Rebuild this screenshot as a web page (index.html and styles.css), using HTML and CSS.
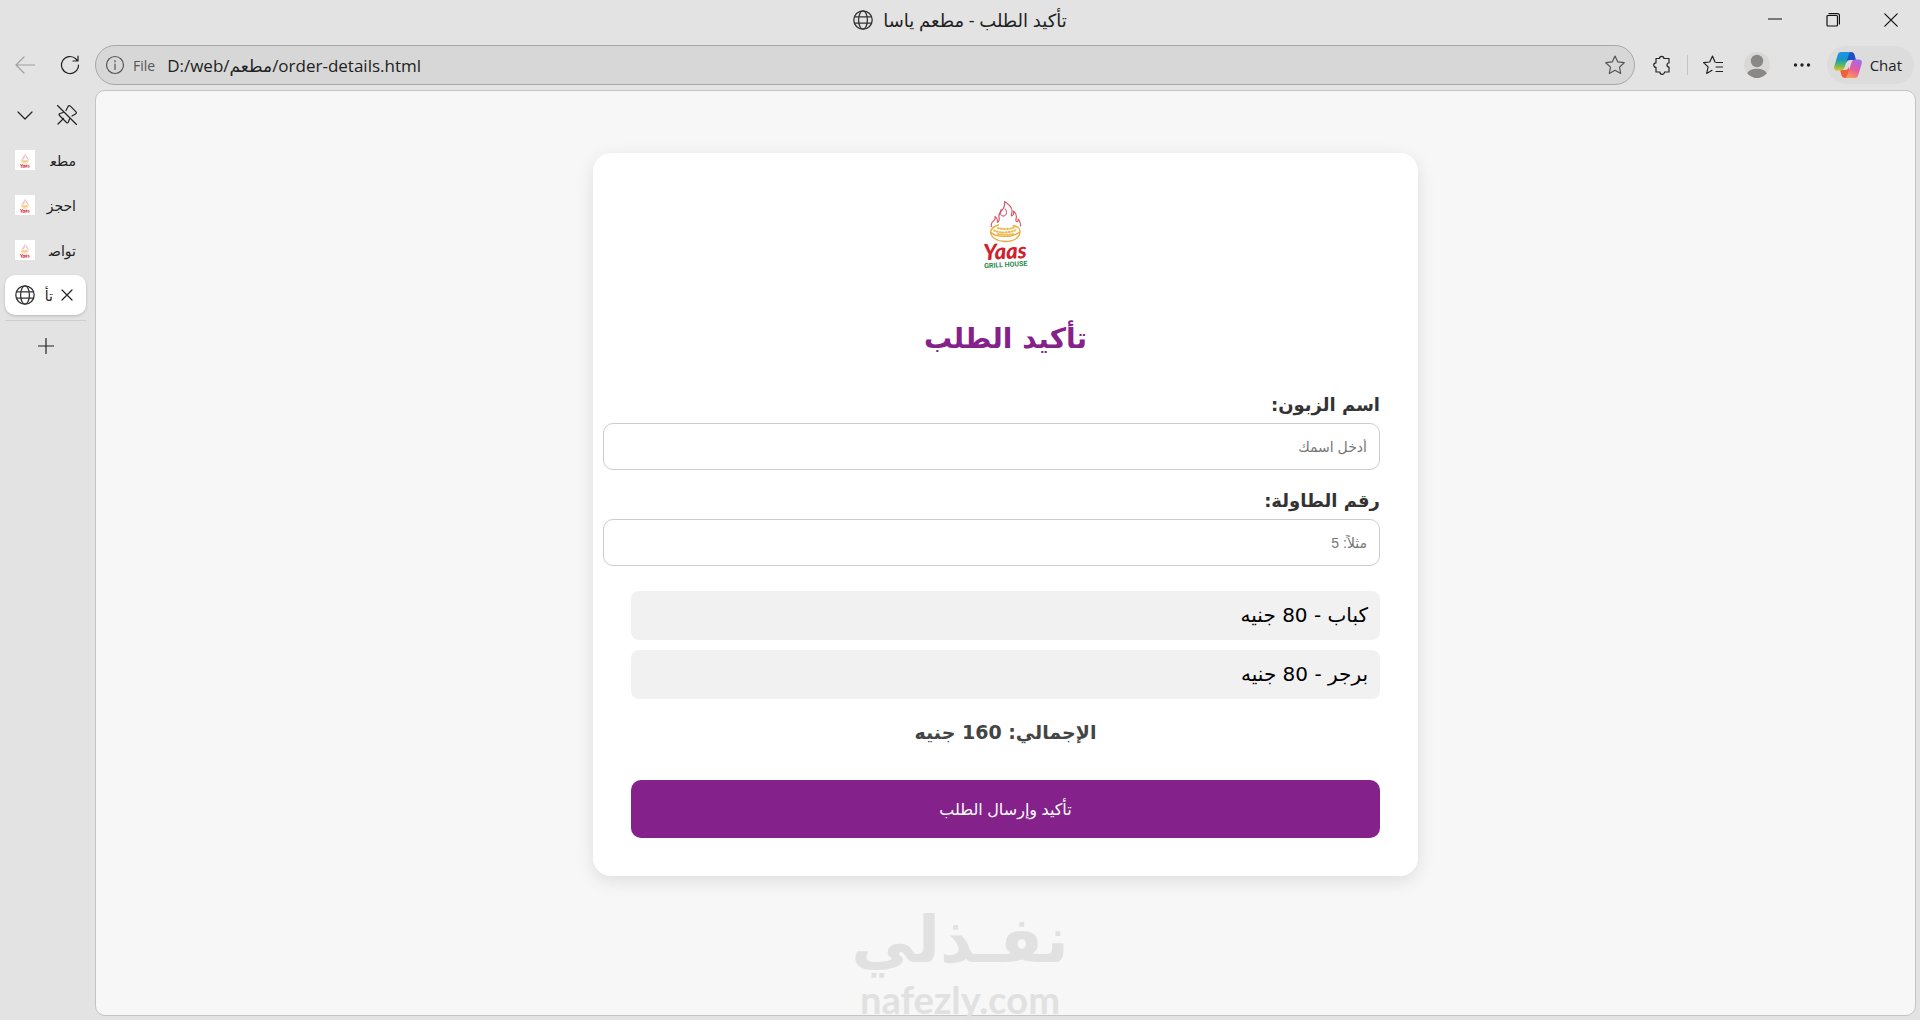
FILE: index.html
```html
<!DOCTYPE html>
<html lang="ar">
<head>
  <meta charset="UTF-8">
  <meta name="viewport" content="width=device-width, initial-scale=1.0">
  <title>تأكيد الطلب - مطعم ياسا</title>
  <link rel="stylesheet" href="styles.css">
</head>
<body>
  <!-- shared icon -->
  <svg class="sprite" aria-hidden="true">
    <symbol id="globe" viewBox="0 0 20 20">
      <g fill="none" stroke="#333" stroke-width="1.3">
        <circle cx="10" cy="10" r="9.2"/>
        <ellipse cx="10" cy="10" rx="4.4" ry="9.2"/>
        <path d="M1.6 6.8h16.8M1.6 13.2h16.8"/>
      </g>
    </symbol>
  </svg>

  <header class="titlebar">
    <div class="window-title">
      <svg class="icon-20"><use href="#globe"/></svg>
      <span dir="rtl">تأكيد الطلب - مطعم ياسا</span>
    </div>
    <div class="window-controls">
      <button aria-label="Minimize"><svg viewBox="0 0 14 14"><path d="M.5 6h13"/></svg></button>
      <button aria-label="Restore"><svg viewBox="0 0 14 14"><rect x="1" y="2.500" width="10.500" height="10.500" rx="1"/><path d="M3 .7h8.500q2 0 2 2V11"/></svg></button>
      <button aria-label="Close"><svg viewBox="0 0 14 14"><path d="M.8.800l12.400 12.400M13.200.800L.800 13.200"/></svg></button>
    </div>
  </header>

  <nav class="toolbar">
    <div class="nav-buttons">
      <button aria-label="Back" disabled><svg class="icon-20" viewBox="0 0 20 20"><path d="M19.500 10H1M9 2L1 10l8 8"/></svg></button>
      <button aria-label="Refresh"><svg class="icon-20" viewBox="0 0 20 20"><path d="M18.500 10A8.500 8.500 0 1 1 16 4l1.500 1.700M18 1v5h-5"/></svg></button>
    </div>
    <div class="address-bar">
      <svg class="icon-20 grey" viewBox="0 0 20 20"><circle cx="10" cy="10" r="8.500"/><path d="M10 9v5.500M10 5.500v1.500"/></svg>
      <label class="scheme" for="address">File</label>
      <input class="address" id="address" type="text" dir="ltr" value="D:/web/مطعم/order-details.html">
      <button aria-label="Add to favorites"><svg class="icon-20 grey" viewBox="0 0 20 20"><path d="M10 1l2.800 5.900 6.400.8-4.700 4.400 1.200 6.400L10 15.300l-5.700 3.200 1.200-6.400L.8 7.700l6.400-.8z"/></svg></button>
    </div>
    <div class="tools">
      <button aria-label="Extensions"><svg class="icon-20" viewBox="0 0 20 20"><path d="M4 3.500h3.500a2.200 2.200 0 0 1 4.400 0H17v4.500a1.900 1.900 0 0 0 0 4v5h-4.500a2.300 2.300 0 0 1-4.600 0H4v-4.600a2.300 2.300 0 0 1 0-4.600z"/></svg></button>
      <span class="divider"></span>
      <button class="favorites" aria-label="Favorites"><svg class="icon-20" viewBox="0 0 20 20"><path d="M13 7.500h7M13 12h7M13 16.500h7M12 7L9.500 1 6.700 7 .6 7.600l4.500 4.300L3.700 18.500 9 15.300"/></svg></button>
      <button aria-label="Profile"><svg class="avatar" viewBox="0 0 26 26"><circle class="avatar-back" cx="13" cy="13" r="13"/><circle cx="13" cy="9" r="6.200"/><path d="M3.200 21.500a10 6 0 0 1 19.600 0q-9.800 9.500-19.600 0z"/></svg></button>
      <button aria-label="Settings and more"><svg class="icon-20 dots" viewBox="0 0 20 20"><circle cx="3.500" cy="10" r="1.700"/><circle cx="10" cy="10" r="1.700"/><circle cx="16.500" cy="10" r="1.700"/></svg></button>
      <button class="chat">
        <svg class="copilot" viewBox="0 0 28 26">
          <defs>
            <linearGradient id="cool" x1="0" y1="0" x2="0" y2="1"><stop offset="0" stop-color="#2292e8"/><stop offset=".4" stop-color="#1599c4"/><stop offset=".7" stop-color="#5bb665"/><stop offset="1" stop-color="#e8bd22"/></linearGradient>
            <linearGradient id="warm" x1=".7" y1="0" x2=".3" y2="1"><stop offset="0" stop-color="#a46ae8"/><stop offset=".5" stop-color="#e55aa2"/><stop offset="1" stop-color="#ff9c50"/></linearGradient>
          </defs>
          <path fill="#1f4fc4" d="M13 0h4c2 0 3 1 3.600 3l1.400 5h-6c-2 0-3 1-4 3z"/>
          <path fill="#ee6140" d="M15 26h-4c-2 0-3-1-3.600-3L6 18h5c2 0 3-1 4-3z"/>
          <path fill="url(#cool)" d="M7 0h10.500c-2 0-2.500 2-3.200 4l-3.600 11c-.8 2.500-2 3.500-4.500 3.500H3C.5 18.500-.3 16.500.4 14L3.500 3.500C4.200 1 5 0 7 0z"/>
          <path fill="url(#warm)" d="M21 26H10.500c2 0 2.500-2 3.200-4l3.600-11c.8-2.500 2-3.500 4.500-3.500H25c2.500 0 3.300 2 2.600 4.500l-3.100 10.500C23.800 25 23 26 21 26z"/>
        </svg>
        Chat
      </button>
    </div>
  </nav>

  <div class="workspace">
    <aside class="tabs">
      <div class="tabs-head">
        <button aria-label="Tab actions"><svg class="icon-20" viewBox="0 0 20 20"><path d="M3 7l7 7 7-7"/></svg></button>
        <button aria-label="Unpin pane"><svg class="icon-20" viewBox="0 0 20 20"><path d="M.5.500l19 19M1 19l5.500-5.500M9 5.500l2.200-4.300q1-1.200 2.200 0l5.400 5.400q1.200 1.200 0 2.200L15 11M6 7.500L2.500 8.800q-1 .7 0 1.700l7 7q1 1 1.700 0L12.500 14"/></svg></button>
      </div>
      <button class="tab">
        <svg class="favicon" viewBox="0 0 50 70"><use href="#yaas"/></svg>
        <span class="tab-text" dir="rtl">مطع&zwj;</span>
      </button>
      <button class="tab">
        <svg class="favicon" viewBox="0 0 50 70"><use href="#yaas"/></svg>
        <span class="tab-text" dir="rtl">احجز</span>
      </button>
      <button class="tab">
        <svg class="favicon" viewBox="0 0 50 70"><use href="#yaas"/></svg>
        <span class="tab-text" dir="rtl">تواص&zwj;</span>
      </button>
      <button class="tab active">
        <svg class="icon-20"><use href="#globe"/></svg>
        <span class="tab-text" dir="rtl">تأ</span>
        <svg class="tab-close" viewBox="0 0 12 12"><path d="M1 1l10 10M11 1L1 11"/></svg>
      </button>
      <button class="new-tab" aria-label="New tab"><svg viewBox="0 0 16 16"><path d="M8 .5v15M.5 8h15"/></svg></button>
    </aside>

    <main class="page" dir="rtl">
      <form class="container">
        <svg class="logo" viewBox="0 0 50 88" direction="ltr" role="img" aria-label="Yaas Grill House">
          <g id="yaas" transform="translate(0 10)">
            <g fill="none">
              <path stroke="#dc5a62" stroke-width="1.2" d="M10.500 25.500c-1-3 1-5 2.500-6 1-1 1.500-2 1-4 2 1.500 3 3.500 2.500 6 1.500-1 2-3 1.500-5-.8-4 1.500-6 4-8.500 1.500-2 2-4 1.500-7.500 4 2.500 8 6 7.500 10-.2 2-.8 3-.5 4.500 1.500 0 2.500-2 2-5 2.500 2 3.500 5 2.500 8-.5 2 .5 3 1.500 2.500.5-.5.800-1.500.5-2.500 2 2 3 4 2.500 7"/>
              <path stroke="#d0446c" stroke-width="1" d="M20 8.500c-2 4 0 7 3 6.500 3-.8 3-4 1.500-7"/>
              <path stroke="#e9aa3c" stroke-width="1.300" d="M9.500 31c1-4 4-6 8-7M32 24.500c5 1 7 3 7 6 0 6-6 10-15 10-8 0-14-4-14.500-9.500 6 6 23 6 29.500-.5"/>
              <path stroke="#efb950" stroke-width="2" stroke-dasharray="1 2" d="M13 29.500c7 3 16 2.500 23-1M17 27c5 1.500 11 1.500 16-.5M17 33c5 1 10 1 15 0"/>
            </g>
            <g transform="rotate(-3 25 50)">
              <text x="24" y="58" class="logo-name">Yaas</text>
              <text x="24" y="66" class="logo-sub">GRILL HOUSE</text>
            </g>
          </g>
        </svg>
        <h2>تأكيد الطلب</h2>
        <label for="customer">اسم الزبون:</label>
        <input class="field" id="customer" type="text" placeholder="أدخل اسمك">
        <label for="table">رقم الطاولة:</label>
        <input class="field" id="table" type="text" placeholder="مثلاً: 5">
        <ul class="order-list">
          <li>كباب - 80 جنيه</li>
          <li>برجر - 80 جنيه</li>
        </ul>
        <div class="total">الإجمالي: 160 جنيه</div>
        <button class="confirm" type="button">تأكيد وإرسال الطلب</button>
      </form>
    </main>
  </div>

  <div class="watermark">
    <span class="watermark-name" dir="rtl">نفـذلي</span>
    <span class="watermark-site">nafezly.com</span>
  </div>
</body>
</html>
```

FILE: styles.css
```css
* {
  margin: 0;
  padding: 0;
  box-sizing: border-box;
}

:root {
  --chrome: #e3e3e3;
  --purple: #84218b;
  --ui-font: 'Open Sans', 'DejaVu Sans', sans-serif;
  --page-font: 'DejaVu Sans', sans-serif;
}

body {
  height: 100vh;
  display: flex;
  flex-direction: column;
  position: relative;
  overflow: hidden;
  background: var(--chrome);
  color: #222;
  font-family: var(--ui-font);
}

button {
  border: none;
  background: none;
  font-family: inherit;
  color: inherit;
  cursor: pointer;
  display: flex;
  align-items: center;
  justify-content: center;
}

svg {
  flex: none;
  fill: none;
  stroke: #222;
  stroke-width: 1.2;
  stroke-linecap: round;
  stroke-linejoin: round;
}

.sprite {
  position: absolute;
  width: 0;
  height: 0;
}

.icon-20 {
  width: 20px;
  height: 20px;
}

.grey {
  stroke: #555;
}

/* title bar */
.titlebar {
  height: 40px;
  flex: none;
  display: grid;
  grid-template-columns: 1fr auto 1fr;
  align-items: center;
}

.window-title {
  grid-column: 2;
  display: flex;
  align-items: center;
  gap: 10px;
  font-size: 18px;
  line-height: 24px;
}

.window-controls {
  display: flex;
  justify-content: flex-end;
}

.window-controls button {
  width: 58px;
  height: 40px;
}

.window-controls svg {
  width: 14px;
  height: 14px;
  stroke: #111;
}

/* toolbar */
.toolbar {
  height: 50px;
  flex: none;
  display: flex;
  align-items: center;
}

.nav-buttons {
  width: 95px;
  display: flex;
  gap: 25px;
  padding-left: 15px;
}

.nav-buttons button:disabled svg {
  stroke: #a0a0a0;
}

.address-bar {
  flex: 1;
  height: 40px;
  display: flex;
  align-items: center;
  padding: 0 9px;
  border: 1px solid #a8a8a8;
  border-radius: 20px;
  background: #d7d7d7;
}

.scheme {
  margin: 0 12px 0 8px;
  font-size: 14px;
  font-weight: 500;
  color: #555;
}

.address {
  flex: 1;
  border: none;
  outline: none;
  background: transparent;
  font-family: var(--ui-font);
  font-size: 17px;
  color: #222;
}

.tools {
  display: flex;
  align-items: center;
  padding-left: 17px;
  padding-right: 6px;
}

.divider {
  width: 1px;
  height: 20px;
  margin: 0 15px;
  background: #c4c4c4;
}

.favorites {
  margin-right: 21px;
}

.avatar {
  width: 26px;
  height: 26px;
  margin-right: 22px;
  fill: #8a8886;
  stroke: none;
}

.avatar-back {
  fill: #d9d8d7;
}

.dots {
  fill: #222;
  stroke: none;
}

.chat {
  height: 38px;
  margin-left: 15px;
  padding: 0 12px 0 7px;
  gap: 8px;
  border-radius: 19px;
  background: #dcdcdc;
  font-size: 15px;
}

.copilot {
  width: 28px;
  height: 26px;
  stroke: none;
}

/* vertical tabs */
.workspace {
  flex: 1;
  min-height: 0;
  display: flex;
  padding: 0 4px 4px 0;
}

.tabs {
  width: 95px;
  flex: none;
  padding: 5px 9px 0 5px;
}

.tabs-head {
  height: 40px;
  margin-bottom: 5px;
  display: flex;
  align-items: center;
  gap: 22px;
  padding-left: 10px;
}

.tab {
  width: 100%;
  height: 40px;
  margin-bottom: 5px;
  padding: 0 10px;
  gap: 8px;
  border-radius: 10px;
  font-size: 14px;
}

.tab-text {
  flex: 1;
  overflow: hidden;
  white-space: nowrap;
  text-align: right;
}

.tab.active {
  background: #fff;
  box-shadow: 0 1px 3px rgba(0, 0, 0, 0.2);
}

.tab-close {
  width: 12px;
  height: 12px;
  margin-right: 3px;
}

.favicon {
  width: 20px;
  height: 20px;
  padding: 2px;
  background: #fff;
}

.new-tab {
  width: 100%;
  height: 50px;
  border-top: 1px solid #cdcdcd;
}

.new-tab svg {
  width: 16px;
  height: 16px;
}

/* order page */
.page {
  flex: 1;
  overflow: hidden;
  border: 1px solid #c4c4c4;
  border-radius: 10px;
  background: #f7f7f7;
  font-family: var(--page-font);
}

.container {
  width: 825px;
  max-width: 100%;
  margin: 62px auto 0;
  padding: 38px;
  border-radius: 18px;
  background: #fff;
  box-shadow: 0 5px 18px rgba(0, 0, 0, 0.1);
}

.logo {
  display: block;
  width: 50px;
  height: 88px;
  margin: 0 auto 40px;
}

.logo-name {
  font-family: 'Lato', sans-serif;
  font-size: 22px;
  font-weight: 900;
  font-style: italic;
  text-anchor: middle;
  fill: #cf202c;
  stroke: none;
}

.logo-sub {
  font-family: 'Roboto', sans-serif;
  font-size: 7px;
  font-weight: 700;
  text-anchor: middle;
  fill: #2b8a50;
  stroke: none;
}

h2 {
  margin-bottom: 32px;
  font-size: 28px;
  line-height: 40px;
  text-align: center;
  color: var(--purple);
}

label[for="customer"],
label[for="table"] {
  display: block;
  margin-bottom: 4px;
  font-size: 18px;
  line-height: 28px;
  font-weight: bold;
  color: #333;
}

/* fields run past the left edge of the column */
.field {
  display: block;
  width: calc(100% + 28px);
  height: 47px;
  margin-bottom: 17px;
  padding: 0 12px;
  border: 1px solid #ccc;
  border-radius: 10px;
  outline: none;
  font-family: 'Liberation Sans', 'DejaVu Sans', sans-serif;
  font-size: 14px;
}

.field::placeholder {
  color: #757575;
}

.order-list {
  margin-top: 25px;
  list-style: none;
}

.order-list li {
  margin-bottom: 10px;
  padding: 0 12px;
  border-radius: 8px;
  background: #f1f1f1;
  font-size: 20px;
  line-height: 49px;
  color: #000;
}

.total {
  margin: 19px 0 34px;
  font-size: 19px;
  line-height: 28px;
  font-weight: bold;
  text-align: center;
  color: #444;
}

.confirm {
  width: 100%;
  height: 58px;
  border-radius: 10px;
  background: var(--purple);
  color: #fff;
  font-family: 'Liberation Sans', 'DejaVu Sans', sans-serif;
  font-size: 16px;
}

/* watermark over the window */
.watermark {
  position: absolute;
  left: 0;
  right: 0;
  bottom: 0;
  display: flex;
  flex-direction: column;
  align-items: center;
  color: #e1e1e1;
  font-weight: bold;
  pointer-events: none;
}

.watermark-name {
  font-family: 'DejaVu Sans', sans-serif;
  font-size: 64px;
  line-height: 76px;
}

.watermark-site {
  font-family: 'Lato', sans-serif;
  font-size: 38px;
  line-height: 42px;
}
```
